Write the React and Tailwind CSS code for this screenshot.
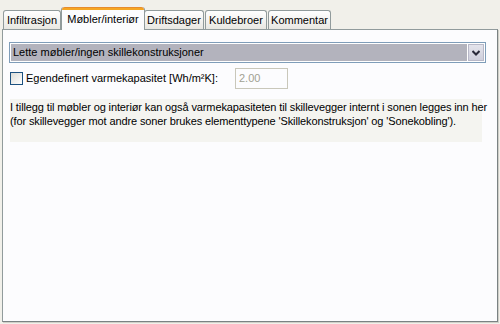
export default function App() {
  const font = { fontFamily: '"Liberation Sans", Arial, sans-serif' };
  const tabs = [
    { label: "Infiltrasjon", w: "w-[58px]" },
    { label: "Møbler/interiør", w: "w-[84px]", active: true },
    { label: "Driftsdager", w: "w-[60px]" },
    { label: "Kuldebroer", w: "w-[62px]" },
    { label: "Kommentar", w: "w-[63px]" },
  ];
  return (
    <div className="w-[500px] h-[324px] bg-[#f1f0ea] text-[11px] text-black" style={font}>
      <div className="flex items-end h-[29px] pl-[3px] relative z-10">
        {tabs.map((t) =>
          t.active ? (
            <div
              key={t.label}
              className={`${t.w} h-[23px] -mx-[1px] mb-[-1px] bg-[#fcfcfe] border-x border-[#919b9c] rounded-t-[3px] flex flex-col`}
            >
              <div className="h-[3px] bg-[#f5a623] border-t border-[#e68b2c] rounded-t-[3px]" />
              <div className="flex-1 flex items-center justify-center pb-[2px]">{t.label}</div>
            </div>
          ) : (
            <div
              key={t.label}
              className={`${t.w} h-[19px] mr-[1px] bg-gradient-to-b from-white to-[#e8e7e2] border border-b-0 border-[#919b9c] rounded-t-[3px] flex items-center justify-center`}
            >
              {t.label}
            </div>
          )
        )}
      </div>
      <div className="mx-[2px] h-[293px] bg-[#fcfcfe] border border-[#919b9c] border-r-[#7a8283] border-b-[#7a8283] shadow-[1px_1px_0_#d0cfc8] pt-[12px] px-[6px]">
        <div className="h-[21px] w-[477px] border border-[#7f9db9] bg-white flex p-[1px]">
          <div className="flex-1 bg-[#b3b3bd] flex items-center pl-[2px]">Lette møbler/ingen skillekonstruksjoner</div>
          <div className="w-[16px] ml-[1px] bg-gradient-to-b from-[#e4e4ec] to-[#cfcfdc] border border-[#b8b8c8] flex items-center justify-center">
            <svg width="8" height="6" viewBox="0 0 8 6">
              <path d="M0.5 1 L4 4.5 L7.5 1" stroke="#2a2a3a" strokeWidth="2" fill="none" />
            </svg>
          </div>
        </div>
        <div className="flex items-center mt-[5px] h-[21px]">
          <div className="w-[13px] h-[13px] ml-[1px] border border-[#1c5180] bg-gradient-to-br from-[#dcdcd7] to-white" />
          <span className="ml-[3px] w-[209px]">Egendefinert varmekapasitet [Wh/m²K]:</span>
          <div className="w-[53px] h-[21px] border border-[#c9c7ba] bg-[#fcfcfe] flex items-center pl-[3px] text-[#a1a192]">2.00</div>
        </div>
        <div className="mt-[10px] w-[472px] bg-[#f4f4f0] leading-[14px] pt-[1px] pb-[14px] ml-[1px] whitespace-nowrap tracking-[-0.12px]">
          <p>I tillegg til møbler og interiør kan også varmekapasiteten til skillevegger internt i sonen legges inn her</p>
          <p>(for skillevegger mot andre soner brukes elementtypene 'Skillekonstruksjon' og 'Sonekobling').</p>
        </div>
      </div>
    </div>
  );
}
